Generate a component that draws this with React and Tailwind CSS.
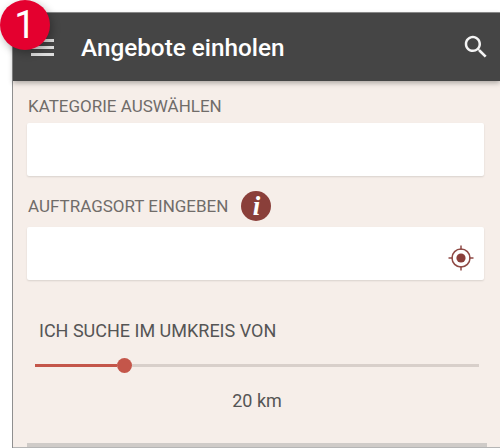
import React from 'react';

const Label = ({ children, className = '' }) => (
  <div className={`pl-px text-[17px] leading-[18px] text-[#706c69] ${className}`}>{children}</div>
);

const Field = ({ children }) => (
  <div className="h-[53px] bg-white rounded-[2px] shadow-[0_1px_2px_rgba(0,0,0,0.12)] flex items-center justify-end pr-[9px]">
    {children}
  </div>
);

const Target = () => (
  <svg className="mt-[8px]" width="28" height="28" viewBox="0 0 28 28" fill="none" stroke="#8f4a45" strokeWidth="1.5">
    <circle cx="14" cy="14" r="9" />
    <circle cx="14" cy="14" r="4.6" fill="#8a3f3a" stroke="none" />
    <path d="M14 1.5V6M14 22v4.5M1.5 14H6M22 14h4.5" />
  </svg>
);

const SearchIcon = () => (
  <svg className="ml-auto" width="30" height="30" viewBox="0 0 24 24" fill="#f4f4f4">
    <path d="M15.5 14h-.79l-.28-.27C15.41 12.59 16 11.11 16 9.5 16 5.91 13.09 3 9.5 3S3 5.91 3 9.5 5.91 16 9.5 16c1.61 0 3.09-.59 4.23-1.57l.27.28v.79l5 4.99L20.49 19l-4.99-5zm-6 0C7.01 14 5 11.99 5 9.5S7.01 5 9.5 5 14 7.01 14 9.5 11.99 14 9.5 14z" />
  </svg>
);

export default function App() {
  return (
    <div className="relative h-[448px] w-[500px] overflow-hidden bg-white pl-[12px] pt-[12px] font-['Roboto',sans-serif]">
      {/* step badge */}
      <div className="absolute left-0 top-0 z-10 flex h-[50px] w-[50px] items-center justify-center rounded-full bg-[#e4002f] text-[38px] text-white shadow-[2px_3px_8px_rgba(0,0,0,0.3)]">
        1
      </div>

      <div className="flex h-[436px] flex-col border-l border-t border-[#8f8f8f] bg-[#f6eee9]">
        {/* toolbar */}
        <div className="flex h-[68px] shrink-0 items-center bg-[#454545] pl-[18px] pr-[9px] shadow-[0_2px_5px_rgba(0,0,0,0.3)]">
          <div className="flex w-[23px] flex-col gap-[4px]">
            <div className="h-[3px] bg-[#dedede]" />
            <div className="h-[3px] bg-[#dedede]" />
            <div className="h-[3px] bg-[#dedede]" />
          </div>
          <div className="ml-[27px] pt-[2px] text-[24.3px] font-medium text-white">Angebote einholen</div>
          <SearchIcon />
        </div>

        {/* form */}
        <div className="flex flex-1 flex-col pl-[14px] pr-[16px]">
          <Label className="mt-[16px] mb-[8px]">KATEGORIE AUSWÄHLEN</Label>
          <Field />
          <div className="mt-[15px] mb-[6px] flex h-[30px] items-center gap-[13px]">
            <Label>AUFTRAGSORT EINGEBEN</Label>
            <div className="flex h-[30px] w-[30px] items-center justify-center rounded-full bg-[#8a3f3a] font-['Liberation_Serif',serif] text-[27px] font-bold italic text-white">
              i
            </div>
          </div>
          <Field>
            <Target />
          </Field>

          <div className="mt-[41px] pl-[12px] text-[18px] leading-[20px] text-[#555]">ICH SUCHE IM UMKREIS VON</div>

          {/* slider */}
          <div className="mt-[17px] ml-[8px] mr-[5px] flex items-center">
            <div className="h-[3px] w-[82px] bg-[#c4564a]" />
            <div className="h-[15px] w-[15px] shrink-0 rounded-full bg-[#c4564a]" />
            <div className="h-[3px] flex-1 bg-[#d8cfca]" />
          </div>

          <div className="mt-[18px] pl-[3px] text-center text-[18px] leading-[20px] text-[#555]">20 km</div>
          <div className="mt-auto -mr-[3px] h-[4px] bg-[#cfcbc8]" />
        </div>
        <div className="h-px bg-[#b5b5b5]" />
      </div>
    </div>
  );
}
